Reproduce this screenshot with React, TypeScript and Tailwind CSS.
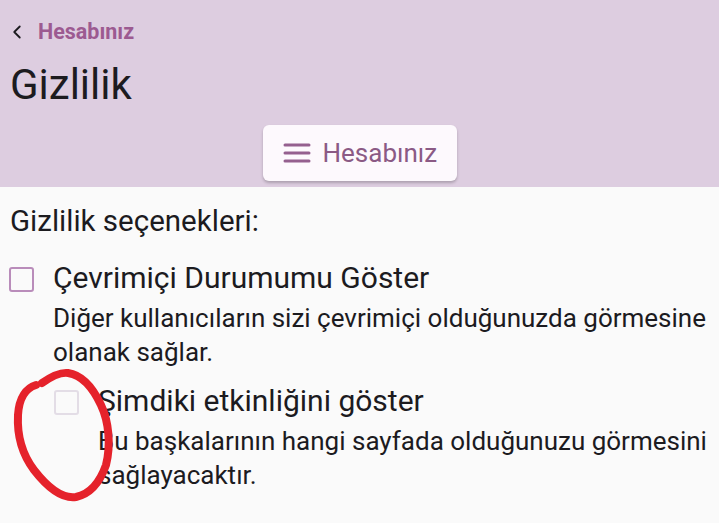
import { ChevronLeft } from "lucide-react";

const font = { fontFamily: "Roboto, 'Noto Sans', sans-serif" };

type OptionProps = {
  title: string;
  description: string;
  disabled?: boolean;
  indent?: boolean;
};

const PrivacyOption = ({ title, description, disabled, indent }: OptionProps) => (
  <div className={`flex gap-[19px] ${indent ? "pl-[54px]" : "pl-[9px]"}`}>
    <div className="pt-[11px]">
      <div
        className={`h-[25px] w-[25px] rounded-[3px] border-2 ${
          disabled ? "border-[#e3dde6]" : "border-[#b98cba]"
        }`}
      />
    </div>
    <div className="flex flex-col">
      <span className="text-[30px] leading-[44px] text-[#1c1b1f]">{title}</span>
      <span className="mt-[1px] text-[26px] leading-[34px] text-[#1c1b1f]">{description}</span>
    </div>
  </div>
);

export default function App() {
  return (
    <div className="relative h-[523px] w-[719px] overflow-hidden bg-[#fafafa]" style={font}>
      <header className="flex h-[187px] flex-col bg-[#ddcde0]">
        <div className="flex items-center gap-[10px] pl-[6px] pt-[20px]">
          <ChevronLeft className="h-[22px] w-[22px] text-[#1c1b1f]" strokeWidth={2} />
          <span className="text-[21.5px] font-bold leading-[24px] text-[#9c5a91]">Hesabınız</span>
        </div>
        <h1 className="pl-[10px] pt-[16px] text-[42px] leading-[50px] text-[#1c1b1f]">Gizlilik</h1>
        <div className="flex justify-center pt-[15px]">
          <button className="flex h-[56px] w-[194px] items-center gap-[12px] rounded-[6px] bg-[#fdf9fd] pl-[20px] shadow-[0_2px_3px_rgba(0,0,0,0.22)]">
            <svg width="28" height="22" viewBox="0 0 28 22">
              <g stroke="#95608f" strokeWidth="3" strokeLinecap="round">
                <line x1="2" y1="3" x2="26" y2="3" />
                <line x1="2" y1="11" x2="26" y2="11" />
                <line x1="2" y1="19" x2="26" y2="19" />
              </g>
            </svg>
            <span className="text-[26px] text-[#8b5a85]">Hesabınız</span>
          </button>
        </div>
      </header>

      <main className="flex flex-col pt-[13px]">
        <p className="pl-[10px] text-[29.5px] leading-[42px] text-[#1c1b1f]">Gizlilik seçenekleri:</p>
        <div className="pt-[14px]">
          <PrivacyOption
            title="Çevrimiçi Durumumu Göster"
            description="Diğer kullanıcıların sizi çevrimiçi olduğunuzda görmesine olanak sağlar."
          />
        </div>
        <div className="pt-[10px]">
          <PrivacyOption
            indent
            disabled
            title="Şimdiki etkinliğini göster"
            description="Bu başkalarının hangi sayfada olduğunuzu görmesini sağlayacaktır."
          />
        </div>
      </main>

      {/* red marker annotation over the screenshot */}
      <svg className="pointer-events-none absolute left-0 top-0" width="719" height="523">
        <path
          d="M42 383 C52 376 60 372 68 373 C82 375 93 388 101 405 C109 422 111 445 106 465 C100 482 90 494 76 497 C62 499 48 488 34 470 C22 454 17 435 18 415 C19 398 26 388 36 385"
          fill="none"
          stroke="#e5222b"
          strokeWidth="8"
          strokeLinecap="round"
          strokeLinejoin="round"
        />
      </svg>
    </div>
  );
}
